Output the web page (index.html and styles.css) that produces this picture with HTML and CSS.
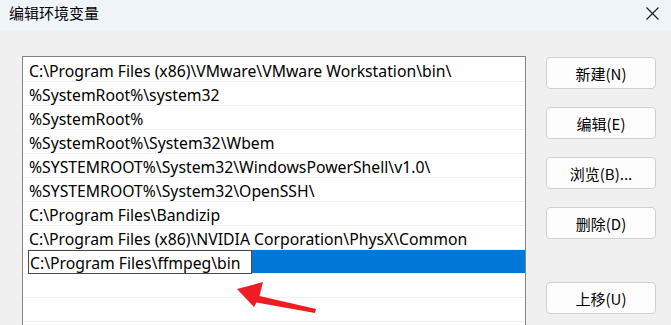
FILE: index.html
```html
<!DOCTYPE html>
<html lang="zh-CN">
<head>
<meta charset="utf-8">
<title>编辑环境变量</title>
<link rel="stylesheet" href="styles.css">
</head>
<body>
<div class="window">
  <div class="titlebar">
    <span class="title">编辑环境变量</span>
    <svg class="close" width="13" height="13" viewBox="0 0 13 13"><path d="M0.5 0.5 L12.5 12.5 M12.5 0.5 L0.5 12.5" stroke="#1a1a1a" stroke-width="1.1" fill="none"/></svg>
  </div>
  <div class="content">
    <div class="listbox">
      <div class="row">C:\Program Files (x86)\VMware\VMware Workstation\bin\</div>
      <div class="row">%SystemRoot%\system32</div>
      <div class="row">%SystemRoot%</div>
      <div class="row">%SystemRoot%\System32\Wbem</div>
      <div class="row">%SYSTEMROOT%\System32\WindowsPowerShell\v1.0\</div>
      <div class="row">%SYSTEMROOT%\System32\OpenSSH\</div>
      <div class="row">C:\Program Files\Bandizip</div>
      <div class="row">C:\Program Files (x86)\NVIDIA Corporation\PhysX\Common</div>
      <div class="row row-editing">
        <div class="edit-gap"></div>
        <div class="edit-box">C:\Program Files\ffmpeg\bin</div>
        <div class="sel-fill"></div>
      </div>
      <div class="row"></div>
      <div class="row"></div>
      <div class="row"></div>
    </div>
    <div class="buttons">
      <div class="btn">新建(N)</div>
      <div class="btn">编辑(E)</div>
      <div class="btn">浏览(B)...</div>
      <div class="btn">删除(D)</div>
      <div class="btn btn-move">上移(U)</div>
    </div>
  </div>
  <svg class="arrow" width="671" height="325" viewBox="0 0 671 325">
    <polygon points="237,289 263,282 259.5,296 316,309 315,313 256.5,302.5 254,307" fill="#ee1c25"/>
  </svg>
</div>
</body>
</html>
```
FILE: styles.css
```css
html, body {
  margin: 0;
  padding: 0;
  width: 671px;
  height: 325px;
  overflow: hidden;
  background: #f0f0f0;
}
.window {
  position: relative;
  width: 671px;
  height: 325px;
  overflow: hidden;
  font-family: "Noto Sans", "Noto Sans CJK SC", sans-serif;
  color: #000;
}
.titlebar {
  height: 31px;
  background: #eff4f9;
  display: flex;
  align-items: center;
  justify-content: space-between;
  padding: 0 12px 0 9px;
}
.title {
  font-family: "Noto Sans CJK SC", sans-serif;
  font-size: 15px;
  line-height: 18px;
  margin-top: -6px;
}
.close {
  display: block;
  margin-top: -5px;
}
.content {
  display: flex;
  padding: 25px 0 0 22px;
  gap: 20px;
}
.listbox {
  width: 502px;
  height: 267px;
  border: 1px solid #858585;
  border-bottom: none;
  background: #fff;
  padding-top: 1px;
  overflow: hidden;
}
.row {
  height: 23px;
  border-bottom: 1px solid #efefef;
  padding-left: 6px;
  font-size: 15.75px;
  line-height: 26px;
  white-space: nowrap;
}
.row-editing {
  display: flex;
  padding-left: 0;
  position: relative;
}
.edit-gap {
  width: 5px;
  background: #fff;
}
.edit-box {
  width: 221px;
  height: 22px;
  border: 1px solid #4a4a4a;
  background: #fff;
  padding-left: 1px;
  line-height: 25px;
  position: relative;
  z-index: 1;
}
.sel-fill {
  flex: 1;
  background: #0078d7;
}
.buttons {
  display: flex;
  flex-direction: column;
  gap: 18px;
  margin-top: 1px;
}
.btn {
  width: 108px;
  height: 30px;
  border: 1px solid #d0d0d0;
  border-radius: 4px;
  background: #fdfdfd;
  font-family: "Noto Sans CJK SC", sans-serif;
  font-size: 15px;
  display: flex;
  align-items: center;
  justify-content: center;
  line-height: 1;
}
.btn-move {
  margin-top: 25px;
}
.arrow {
  position: absolute;
  left: 0;
  top: 0;
  pointer-events: none;
}
```
